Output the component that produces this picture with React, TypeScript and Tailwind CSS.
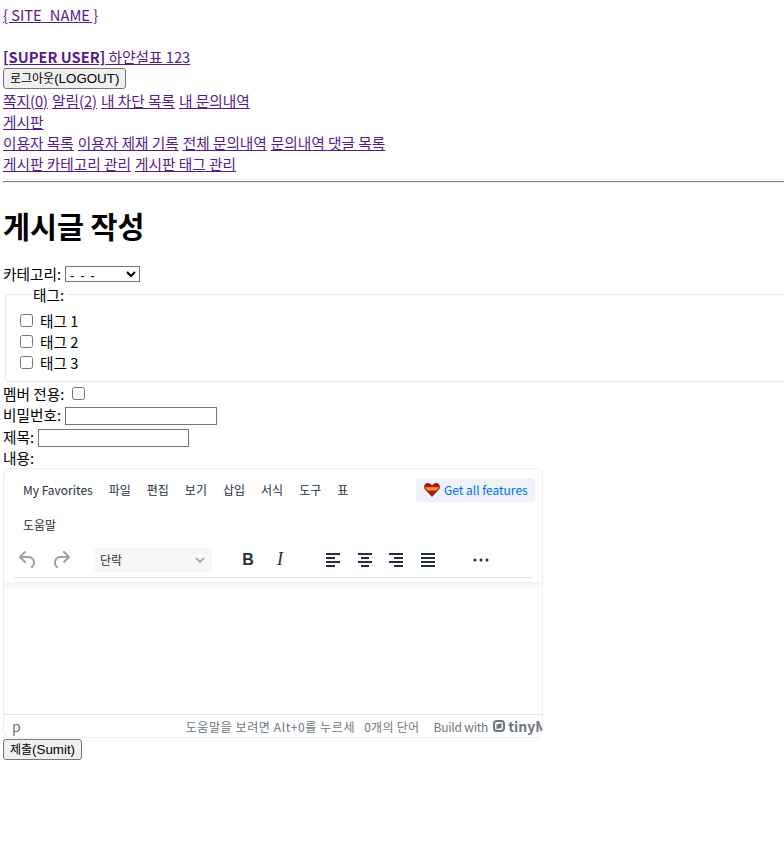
import React from "react";

function L({ children }: { children: React.ReactNode }) {
  return <a href="#" className="text-[#551a8b] underline">{children}</a>;
}

function Check() {
  return <input type="checkbox" className="w-[13px] h-[13px]" />;
}

function Tool({ d, cls = "" }: { d: string; cls?: string }) {
  return (
    <svg width="24" height="24" viewBox="0 0 24 24" className={cls} fill="currentColor"><path d={d} /></svg>
  );
}

const Align = {
  left: "M5 5h14v2H5zM5 9h9v2H5zM5 13h14v2H5zM5 17h9v2H5z",
  center: "M5 5h14v2H5zM8 9h8v2H8zM5 13h14v2H5zM8 17h8v2H8z",
  right: "M5 5h14v2H5zM10 9h9v2h-9zM5 13h14v2H5zM10 17h9v2h-9z",
  justify: "M5 5h14v2H5zM5 9h14v2H5zM5 13h14v2H5zM5 17h14v2H5z",
};

function Menu({ children }: { children: React.ReactNode }) {
  return <span className="px-[4px] h-[34px] flex items-center text-[12px] text-[#222f3e]">{children}</span>;
}

function Btn({ ko, en, cls }: { ko: string; en: string; cls: string }) {
  return (
    <button className={`block px-[6px] bg-[#efefef] border border-[#767676] rounded-[3px] text-[13.33px] leading-[19px] [font-family:'Liberation_Sans','Noto_Sans_CJK_KR',sans-serif] ${cls}`}>
      <span className="text-[12px]">{ko}</span>{en}
    </button>
  );
}

export default function App() {
  return (
    <div className="min-h-[860px] bg-white pt-[4px] pl-[3px] text-[14.67px] leading-[21px] text-black overflow-hidden [font-family:'Noto_Sans_CJK_KR',sans-serif]">
      <div><L>{"{ SITE_NAME }"}</L></div>
      <div className="h-[21px]" />
      <div><L><b>[SUPER USER]</b> 하얀설표 123</L></div>
      <div className="h-[22px]">
        <Btn ko="로그아웃" en="(LOGOUT)" cls="h-[21px] mt-[1px]" />
      </div>
      <div className="flex gap-[4px]"><L>쪽지(0)</L><L>알림(2)</L><L>내 차단 목록</L><L>내 문의내역</L></div>
      <div><L>게시판</L></div>
      <div className="flex gap-[4px]"><L>이용자 목록</L><L>이용자 제재 기록</L><L>전체 문의내역</L><L>문의내역 댓글 목록</L></div>
      <div className="flex gap-[4px]"><L>게시판 카테고리 관리</L><L>게시판 태그 관리</L></div>
      <hr className="mt-[7px] border-0 border-t border-[#808080] h-[2px] border-b-[#eee] border-b" />
      <h1 className="mt-[21px] mb-[17px] text-[29.33px] leading-[42px] font-bold">게시글 작성</h1>

      <div className="flex items-center h-[21px]">
        <span>카테고리:</span>
        <select className="ml-[4px] w-[75px] h-[16px] border border-[#767676] rounded-none text-[13.33px] leading-[14px] tracking-[1px] [font-family:'Liberation_Sans',sans-serif]">
          <option>- - -</option>
        </select>
      </div>
      <fieldset className="border border-[#e8e8e8] ml-[2px] pl-[14px] pt-[5px] h-[98px] -mr-[20px] rounded-[2px]">
        <legend className="px-[2px] ml-[11px] leading-[21px]">태그:</legend>
        <div className="flex items-center h-[21px] gap-[7px]"><Check /><span>태그 1</span></div>
        <div className="flex items-center h-[21px] gap-[7px]"><Check /><span>태그 2</span></div>
        <div className="flex items-center h-[21px] gap-[7px]"><Check /><span>태그 3</span></div>
      </fieldset>
      <div className="flex items-center h-[22px] gap-[8px]"><span>멤버 전용:</span><Check /></div>
      <div className="flex items-end h-[21px]"><span>비밀번호:</span><input className="ml-[4px] w-[152px] h-[18px] border border-[#767676]" /></div>
      <div className="flex items-end h-[22px]"><span>제목:</span><input className="ml-[4px] w-[151px] h-[18px] border border-[#767676]" /></div>
      <div className="h-[21px]">내용:</div>

      <div className="w-[540px] h-[270px] border border-[#eeeeee] rounded-[8px] flex flex-col overflow-hidden">
        <div className="relative z-10 pt-[3px] px-[10px] shadow-[0_4px_8px_rgba(34,47,62,0.08)]">
          <div className="flex h-[35px] items-center justify-between -mr-[3px] pl-[5px]">
            <div className="flex gap-[8px]">
              <Menu>My Favorites</Menu><Menu>파일</Menu><Menu>편집</Menu><Menu>보기</Menu><Menu>삽입</Menu><Menu>서식</Menu><Menu>도구</Menu><Menu>표</Menu>
            </div>
            <div className="flex items-center h-[24px] w-[119px] pl-[8px] gap-[4px] rounded-[4px] bg-[#edf3f9] text-[12px] text-[#006ce7] whitespace-nowrap">
              <svg width="16" height="15" viewBox="0 0 15 14" className="shrink-0"><path d="M7.5 14 0.6 6.6C-.6 4.6.4 1 3.6 1c1.8 0 3.1 1 3.9 2.2C8.3 2 9.6 1 11.4 1c3.2 0 4.2 3.6 3 5.6z" fill="#b5121f" /><path d="M1 5h13l-2.4 3H3.4z" fill="#f2a51c" /></svg>
              <span>Get all features</span>
            </div>
          </div>
          <div className="flex h-[35px] items-center pl-[5px]"><Menu>도움말</Menu></div>
          <div className="flex h-[36px] items-center border-b border-[#e0e0e0] text-[#222f3e]">
            <div className="flex items-center text-[#9aa1a9] ml-[2px]">
              <Tool d="M6.4 8H12c3.7 0 6.2 2 6.8 5.1.6 2.7-.4 5.6-2.3 6.8a1 1 0 0 1-1-1.8c1.1-.6 1.8-2.7 1.4-4.6-.5-2.1-2.1-3.5-4.9-3.5H6.4l3.3 3.3a1 1 0 1 1-1.4 1.4l-5-5a1 1 0 0 1 0-1.4l5-5a1 1 0 0 1 1.4 1.4L6.4 8Z" />
              <Tool cls="ml-[9px]" d="M17.6 10H12c-2.8 0-4.4 1.4-4.9 3.5-.4 2 .3 4 1.4 4.6a1 1 0 1 1-1 1.8c-2-1.2-2.9-4.1-2.3-6.8.6-3 3.2-5.1 6.8-5.1h5.6l-3.3-3.3a1 1 0 1 1 1.4-1.4l5 5a1 1 0 0 1 0 1.4l-5 5a1 1 0 0 1-1.4-1.4l3.3-3.3Z" />
            </div>
            <div className="ml-[21px] w-[118px] h-[24px] px-[6px] rounded-[4px] bg-[#f7f7f7] flex items-center justify-between text-[12px]">
              <span>단락</span>
              <svg width="12" height="12" viewBox="0 0 12 12" fill="none" stroke="#8a939d" strokeWidth="1.5"><path d="m2 4 4 4 4-4" /></svg>
            </div>
            <b className="ml-[24px] w-[24px] text-center text-[16px] [font-family:'Liberation_Sans',sans-serif]">B</b>
            <i className="ml-[8px] w-[24px] text-center text-[18px] [font-family:'Liberation_Serif',serif]">I</i>
            <Tool d={Align.left} cls="ml-[29px]" />
            <Tool d={Align.center} cls="ml-[8px]" />
            <Tool d={Align.right} cls="ml-[7px]" />
            <Tool d={Align.justify} cls="ml-[8px]" />
            <Tool d="M6 10.5a1.5 1.5 0 1 0 0 3 1.5 1.5 0 0 0 0-3zm6 0a1.5 1.5 0 1 0 0 3 1.5 1.5 0 0 0 0-3zm6 0a1.5 1.5 0 1 0 0 3 1.5 1.5 0 0 0 0-3z" cls="ml-[29px]" />
          </div>
          <div className="h-[4px]" />
        </div>
        <div className="flex-1" />
        <div className="h-[23px] border-t border-[#e5e5e5] flex items-center pl-[8px] text-[12px] text-[#6d7680] whitespace-nowrap overflow-hidden">
          <span className="text-[14px]">p</span>
          <span className="ml-[165px] tracking-[0.6px]">도움말을 보려면 Alt+0를 누르세</span>
          <span className="ml-[9px] tracking-[0.3px]">0개의 단어</span>
          <span className="ml-[14px] tracking-[-0.2px]">Build with</span>
          <svg width="12" height="12" viewBox="0 0 12 12" className="ml-[5px] shrink-0"><rect x="1" y="1" width="10" height="10" rx="3" fill="none" stroke="#6d7680" strokeWidth="2" /><path d="M3.5 4.5 8.5 3v5l-5 1z" fill="#6d7680" /></svg>
          <span className="ml-[3px] font-bold text-[14px]">tinyMCE</span>
        </div>
      </div>
      <Btn ko="제출" en="(Sumit)" cls="h-[21px] mt-[1px]" />
    </div>
  );
}
